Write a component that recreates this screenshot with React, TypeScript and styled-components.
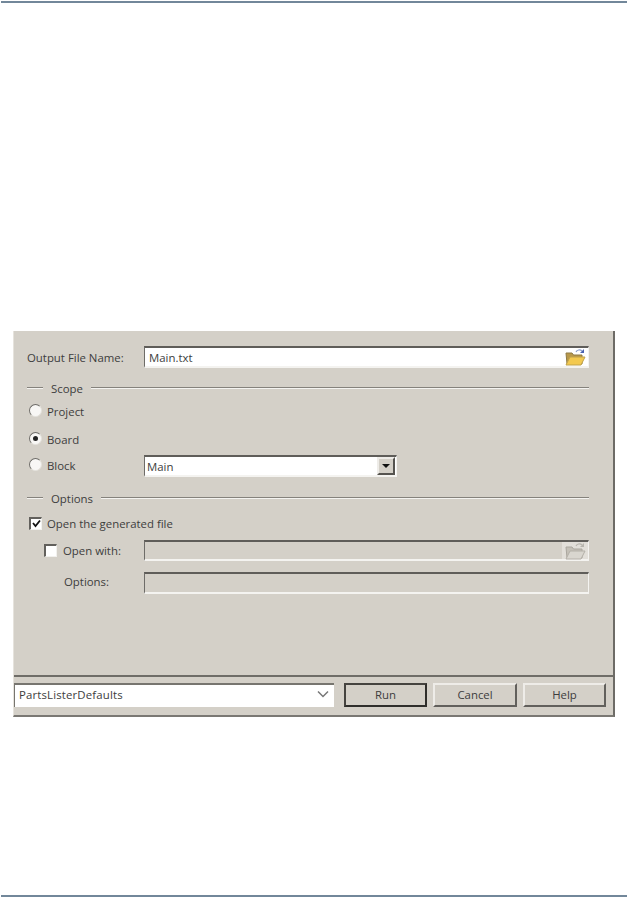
import React from 'react';
import styled, { createGlobalStyle } from 'styled-components';

const GlobalStyle = createGlobalStyle`
  html, body {
    margin: 0;
    padding: 0;
    background: #fff;
  }
`;

const Page = styled.div`
  width: 628px;
  height: 898px;
  display: flex;
  flex-direction: column;
  overflow: hidden;
  font-family: "Open Sans", "Noto Sans", sans-serif;
  font-size: 11.4px;
  color: #3d3d3d;
`;

const Rule = styled.div<{ $top: number }>`
  height: 2px;
  margin: ${p => p.$top}px 1px 0;
  background: #72879a;
`;

const Dialog = styled.div`
  width: 602px;
  height: 386px;
  margin: 328px 0 0 13px;
  box-sizing: border-box;
  display: flex;
  flex-direction: column;
  background: #d4d0c8;
  border-left: 1px solid #e6e3dd;
  border-right: 2px solid #6d6b66;
  border-bottom: 2px solid #7a7873;
`;

const Body = styled.div`
  flex: 1;
  padding: 15px 24px 0 13px;
  display: flex;
  flex-direction: column;
`;

const Row = styled.div<{ $h: number; $mt?: number }>`
  height: ${p => p.$h}px;
  margin-top: ${p => p.$mt ?? 0}px;
  display: flex;
  align-items: center;
`;

const Label = styled.span<{ $w: number; $indent?: number; $lift?: number }>`
  width: ${p => p.$w}px;
  flex: none;
  box-sizing: border-box;
  margin-top: ${p => -(p.$lift ?? 0)}px;
  padding-left: ${p => p.$indent ?? 0}px;
  white-space: nowrap;
`;

const RadioLabel = styled.span`
  width: 117px;
  height: 20px;
  flex: none;
  align-self: flex-start;
  display: flex;
  align-items: center;
`;

const Field = styled.div<{ $disabled?: boolean; $w?: number; $pl?: number }>`
  ${p => (p.$w ? `width: ${p.$w}px; flex: none;` : 'flex: 1;')}
  height: 100%;
  box-sizing: border-box;
  display: flex;
  align-items: center;
  justify-content: space-between;
  padding: 0 0 0 ${p => p.$pl ?? 4}px;
  background: ${p => (p.$disabled ? '#d4d0c8' : '#fff')};
  border-top: 2px solid #5f5d59;
  border-left: 1px solid #6e6c68;
  border-right: 1px solid #f4f3f0;
  border-bottom: 2px solid #f4f3f0;
`;

const IconCell = styled.div<{ $muted?: boolean }>`
  width: 26px;
  height: 100%;
  flex: none;
  display: flex;
  align-items: center;
  justify-content: center;
  background: ${p => (p.$muted ? '#e2dfd9' : 'transparent')};
`;

const Legend = styled.div<{ $mt: number }>`
  height: 16px;
  margin-top: ${p => p.$mt}px;
  display: flex;
  align-items: center;
  gap: 8px;
  &::before,
  &::after {
    content: '';
    height: 0;
    border-top: 1px solid #85827c;
    border-bottom: 1px solid #f4f3f0;
  }
  &::before {
    width: 16px;
    flex: none;
  }
  &::after {
    flex: 1;
  }
`;

const RadioMark = styled.span<{ $on?: boolean }>`
  width: 13px;
  height: 13px;
  flex: none;
  margin: -2px 5px 0 2px;
  box-sizing: border-box;
  border-radius: 50%;
  background: #f8f7f5;
  border: 1px solid #e4e2dc;
  border-top-color: #6e6c68;
  border-left-color: #6e6c68;
  display: flex;
  align-items: center;
  justify-content: center;
  &::after {
    content: '';
    width: 5px;
    height: 5px;
    border-radius: 50%;
    background: ${p => (p.$on ? '#222' : 'transparent')};
  }
`;

const CheckMark = styled.span<{ $ml?: number; $mr?: number }>`
  width: 13px;
  height: 13px;
  flex: none;
  margin: 0 ${p => p.$mr ?? 5}px 0 ${p => p.$ml ?? 2}px;
  box-sizing: border-box;
  background: #fff;
  border: 1px solid #f2f1ee;
  border-top: 2px solid #62605c;
  border-left: 2px solid #62605c;
  display: flex;
  align-items: center;
  justify-content: center;
`;

const DropButton = styled.div`
  width: 18px;
  height: 18px;
  margin-right: 1px;
  flex: none;
  box-sizing: border-box;
  background: #d4d0c8;
  border: 2px solid;
  border-color: #eeece8 #55534f #55534f #eeece8;
  display: flex;
  align-items: center;
  justify-content: center;
  &::after {
    content: '';
    border-style: solid;
    border-width: 4px 4px 0;
    border-color: #111 transparent transparent;
  }
`;

const Footer = styled.div`
  height: 40px;
  box-sizing: border-box;
  border-top: 2px solid #6f6d68;
  padding: 6px 6px 0 0;
  display: flex;
  gap: 6px;
`;

const Combo = styled.div`
  width: 320px;
  height: 24px;
  margin-right: 4px;
  box-sizing: border-box;
  padding: 0 5px 4px 4px;
  background: #fff;
  border-top: 2px solid #77756f;
  border-left: 1px solid #77756f;
  display: flex;
  align-items: center;
  justify-content: space-between;
  letter-spacing: 0.15px;
`;

const Button = styled.div<{ $default?: boolean; $w?: number }>`
  width: ${p => p.$w ?? 83}px;
  height: 24px;
  box-sizing: border-box;
  padding-bottom: 2px;
  display: flex;
  align-items: center;
  justify-content: center;
  background: #d4d0c8;
  border: 2px solid;
  border-color: ${p =>
    p.$default ? '#45433f #2f2e2b #2f2e2b #45433f' : '#eeece8 #62605c #62605c #eeece8'};
`;

const FolderIcon = ({ muted }: { muted?: boolean }) => (
  <svg width="22" height="18" viewBox="0 0 22 18">
    <path d="M2 5h6l1.500 2H18v9H3z" fill={muted ? '#c4c0b7' : '#b8984a'} stroke={muted ? '#aaa69e' : '#8f7a45'} />
    <path d="M6 9h15l-4 8H2z" fill={muted ? '#d9d6cf' : '#f3c94f'} stroke={muted ? '#b4b0a8' : '#c0a24c'} />
    <path d="M12 4c1-2 4-3 6-1" fill="none" stroke={muted ? '#b8b5ae' : '#8fa0cc'} strokeWidth="1.200" />
    <path d="M20 1l0 4-4 0z" fill={muted ? '#b8b5ae' : '#4a62b0'} />
  </svg>
);

const CheckGlyph = () => (
  <svg width="9" height="9" viewBox="0 0 9 9">
    <path d="M1 4l2.500 3L8 1.500" fill="none" stroke="#111" strokeWidth="1.800" />
  </svg>
);

const Chevron = () => (
  <svg width="12" height="8" viewBox="0 0 12 8">
    <path d="M1 1.500l5 5 5-5" fill="none" stroke="#777" strokeWidth="1.500" />
  </svg>
);

export default function App() {
  return (
    <Page>
      <GlobalStyle />
      <Rule $top={1} />
      <Dialog>
        <Body>
          <Row $h={22}>
            <Label $w={117}>Output File Name:</Label>
            <Field>
              Main.txt
              <IconCell>
                <FolderIcon />
              </IconCell>
            </Field>
          </Row>
          <Legend $mt={12}>Scope</Legend>
          <Row $h={16} $mt={7}>
            <RadioMark />
            Project
          </Row>
          <Row $h={16} $mt={12}>
            <RadioMark $on />
            Board
          </Row>
          <Row $h={22} $mt={8}>
            <RadioLabel>
              <RadioMark />
              Block
            </RadioLabel>
            <Field $w={253} $pl={2}>
              Main
              <DropButton />
            </Field>
          </Row>
          <Legend $mt={13}>Options</Legend>
          <Row $h={16} $mt={9}>
            <CheckMark>
              <CheckGlyph />
            </CheckMark>
            Open the generated file
          </Row>
          <Row $h={21} $mt={9}>
            <CheckMark $ml={17} $mr={6} />
            <Label $w={81}>Open with:</Label>
            <Field $disabled>
              <span />
              <IconCell $muted>
                <FolderIcon muted />
              </IconCell>
            </Field>
          </Row>
          <Row $h={22} $mt={11}>
            <Label $w={117} $indent={37} $lift={4}>
              Options:
            </Label>
            <Field $disabled />
          </Row>
        </Body>
        <Footer>
          <Combo>
            PartsListerDefaults
            <Chevron />
          </Combo>
          <Button $default>Run</Button>
          <Button $w={84}>Cancel</Button>
          <Button>Help</Button>
        </Footer>
      </Dialog>
      <Rule $top={178} />
    </Page>
  );
}
